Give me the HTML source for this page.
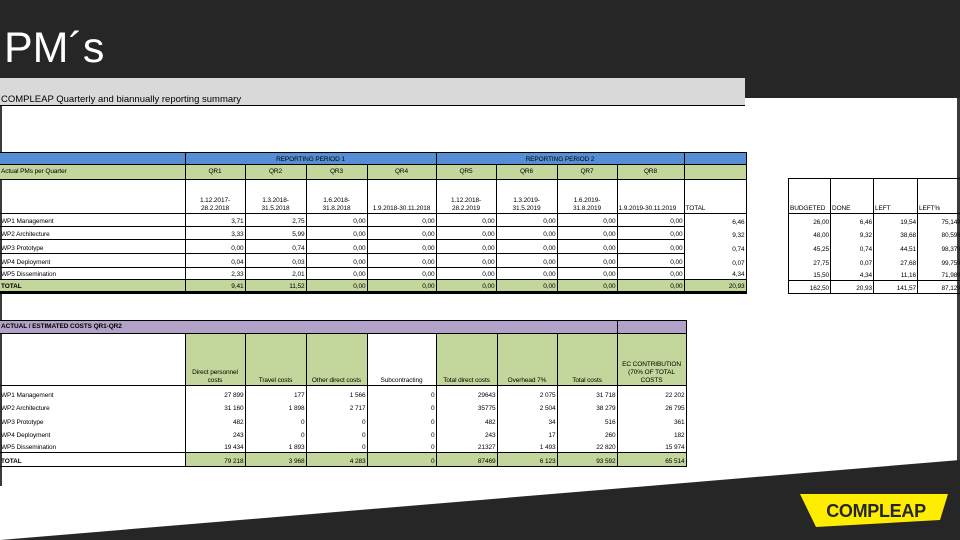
<!DOCTYPE html>
<html><head><meta charset="utf-8"><style>
*{margin:0;padding:0;box-sizing:border-box}
body{width:960px;height:540px;overflow:hidden;background:#fff;position:relative;font-family:"Liberation Sans",sans-serif}
.a{position:absolute}
table{border-collapse:collapse;table-layout:fixed;position:absolute;font-size:6.5px;color:#000;letter-spacing:-0.1px}
td{border:1px solid #000;padding:0 1px;white-space:nowrap;overflow:hidden;text-align:right;vertical-align:bottom;line-height:8px}
td.l{text-align:left;border-left:none}
td.c{text-align:center}
.b{background:#558ed5}
.g{background:#c3d69b}
.p{background:#b3a2c7}
.nb{border-top:none;border-bottom:none}
</style></head><body>
<div class="a" style="left:0;top:0;width:960px;height:78px;background:#262626"></div>
<div class="a" style="left:745px;top:78px;width:215px;height:20px;background:#262626"></div>
<div class="a" style="left:0;top:78px;width:745px;height:28px;background:#d9d9d9;border-bottom:1px solid #000"></div>
<div class="a" style="left:4px;top:24px;font-size:43px;color:#fff;line-height:48px">PM´s</div>
<div class="a" style="left:1px;top:95px;font-size:9.5px;line-height:10px">COMPLEAP Quarterly and biannually reporting summary</div>
<div class="a" style="left:0;top:106px;width:2px;height:380px;background:#3a3a3a"></div>
<div class="a" style="left:957px;top:98px;width:3px;height:380px;background:#3a3a3a"></div>

<table style="left:0;top:152px;width:746px">
<colgroup><col style="width:185px"><col style="width:60px"><col style="width:61px"><col style="width:61px"><col style="width:69px"><col style="width:60px"><col style="width:61px"><col style="width:60px"><col style="width:67px"><col style="width:62px"></colgroup>
<tr style="height:12px"><td class="b l"></td><td class="b c" colspan="4">REPORTING PERIOD 1</td><td class="b c" colspan="4">REPORTING PERIOD 2</td><td class="b"></td></tr>
<tr style="height:15px"><td class="g l" style="vertical-align:middle">Actual PMs per Quarter</td><td class="g c" style="vertical-align:middle">QR1</td><td class="g c" style="vertical-align:middle">QR2</td><td class="g c" style="vertical-align:middle">QR3</td><td class="g c" style="vertical-align:middle">QR4</td><td class="g c" style="vertical-align:middle">QR5</td><td class="g c" style="vertical-align:middle">QR6</td><td class="g c" style="vertical-align:middle">QR7</td><td class="g c" style="vertical-align:middle">QR8</td><td class="g"></td></tr>
<tr style="height:34px"><td class="l"></td><td class="c">1.12.2017-<br>28.2.2018</td><td class="c">1.3.2018-<br>31.5.2018</td><td class="c">1.6.2018-<br>31.8.2018</td><td class="c">1.9.2018-30.11.2018</td><td class="c">1.12.2018-<br>28.2.2019</td><td class="c">1.3.2019-<br>31.5.2019</td><td class="c">1.6.2019-<br>31.8.2019</td><td style="text-align:left">1.9.2019-30.11.2019</td><td style="text-align:left">TOTAL</td></tr>
<tr style="height:13px"><td class="l">WP1 Management</td><td>3,71</td><td>2,75</td><td>0,00</td><td>0,00</td><td>0,00</td><td>0,00</td><td>0,00</td><td>0,00</td><td class="nb">6,46</td></tr>
<tr style="height:13px"><td class="l">WP2 Architecture</td><td>3,33</td><td>5,99</td><td>0,00</td><td>0,00</td><td>0,00</td><td>0,00</td><td>0,00</td><td>0,00</td><td class="nb">9,32</td></tr>
<tr style="height:14px"><td class="l">WP3 Prototype</td><td>0,00</td><td>0,74</td><td>0,00</td><td>0,00</td><td>0,00</td><td>0,00</td><td>0,00</td><td>0,00</td><td class="nb">0,74</td></tr>
<tr style="height:14px"><td class="l">WP4 Deployment</td><td>0,04</td><td>0,03</td><td>0,00</td><td>0,00</td><td>0,00</td><td>0,00</td><td>0,00</td><td>0,00</td><td class="nb">0,07</td></tr>
<tr style="height:12px"><td class="l">WP5 Dissemination</td><td>2,33</td><td>2,01</td><td>0,00</td><td>0,00</td><td>0,00</td><td>0,00</td><td>0,00</td><td>0,00</td><td class="nb">4,34</td></tr>
<tr style="height:13px"><td class="g l" style="font-weight:bold;border-bottom:3px solid #000">TOTAL</td><td class="g" style="border-bottom:3px solid #000">9,41</td><td class="g" style="border-bottom:3px solid #000">11,52</td><td class="g" style="border-bottom:3px solid #000">0,00</td><td class="g" style="border-bottom:3px solid #000">0,00</td><td class="g" style="border-bottom:3px solid #000">0,00</td><td class="g" style="border-bottom:3px solid #000">0,00</td><td class="g" style="border-bottom:3px solid #000">0,00</td><td class="g" style="border-bottom:3px solid #000">0,00</td><td class="g" style="border-bottom:3px solid #000">20,93</td></tr>
</table>

<table style="left:788px;top:178px;width:176px">
<colgroup><col style="width:42px"><col style="width:43px"><col style="width:44px"><col style="width:47px"></colgroup>
<tr style="height:35px"><td style="text-align:left">BUDGETED</td><td style="text-align:left">DONE</td><td style="text-align:left">LEFT</td><td style="text-align:left">LEFT%</td></tr>
<tr style="height:13px"><td class="nb">26,00</td><td class="nb">6,46</td><td class="nb">19,54</td><td class="nb">75,14%</td></tr>
<tr style="height:13px"><td class="nb">48,00</td><td class="nb">9,32</td><td class="nb">38,68</td><td class="nb">80,59%</td></tr>
<tr style="height:14px"><td class="nb">45,25</td><td class="nb">0,74</td><td class="nb">44,51</td><td class="nb">98,37%</td></tr>
<tr style="height:14px"><td class="nb">27,75</td><td class="nb">0,07</td><td class="nb">27,68</td><td class="nb">99,75%</td></tr>
<tr style="height:13px"><td class="nb">15,50</td><td class="nb">4,34</td><td class="nb">11,16</td><td class="nb">71,98%</td></tr>
<tr style="height:13px"><td>162,50</td><td>20,93</td><td>141,57</td><td>87,12%</td></tr>
</table>

<table style="left:0;top:320px;width:686px">
<colgroup><col style="width:185px"><col style="width:60px"><col style="width:61px"><col style="width:61px"><col style="width:69px"><col style="width:61px"><col style="width:60px"><col style="width:60px"><col style="width:69px"></colgroup>
<tr style="height:13px"><td class="p l" colspan="8" style="font-weight:bold;vertical-align:middle">ACTUAL / ESTIMATED COSTS QR1-QR2</td><td class="p"></td></tr>
<tr style="height:52px"><td class="l"></td><td class="g c">Direct personnel<br>costs</td><td class="g c">Travel costs</td><td class="g c">Other direct costs</td><td class="c">Subcontracting</td><td class="g c">Total direct costs</td><td class="g c">Overhead 7%</td><td class="g c">Total costs</td><td class="g c">EC CONTRIBUTION<br>(70% OF TOTAL<br>COSTS</td></tr>
<tr style="height:14px"><td class="l nb">WP1 Management</td><td class="nb">27 899</td><td class="nb">177</td><td class="nb">1 566</td><td class="nb">0</td><td class="nb">29643</td><td class="nb">2 075</td><td class="nb">31 718</td><td class="nb">22 202</td></tr>
<tr style="height:13px"><td class="l nb">WP2 Architecture</td><td class="nb">31 160</td><td class="nb">1 898</td><td class="nb">2 717</td><td class="nb">0</td><td class="nb">35775</td><td class="nb">2 504</td><td class="nb">38 279</td><td class="nb">26 795</td></tr>
<tr style="height:14px"><td class="l nb">WP3 Prototype</td><td class="nb">482</td><td class="nb">0</td><td class="nb">0</td><td class="nb">0</td><td class="nb">482</td><td class="nb">34</td><td class="nb">516</td><td class="nb">361</td></tr>
<tr style="height:13px"><td class="l nb">WP4 Deployment</td><td class="nb">243</td><td class="nb">0</td><td class="nb">0</td><td class="nb">0</td><td class="nb">243</td><td class="nb">17</td><td class="nb">260</td><td class="nb">182</td></tr>
<tr style="height:13px"><td class="l nb">WP5 Dissemination</td><td class="nb">19 434</td><td class="nb">1 893</td><td class="nb">0</td><td class="nb">0</td><td class="nb">21327</td><td class="nb">1 493</td><td class="nb">22 820</td><td class="nb">15 974</td></tr>
<tr style="height:14px"><td class="l" style="font-weight:bold">TOTAL</td><td class="g">79 218</td><td class="g">3 968</td><td class="g">4 283</td><td class="g">0</td><td class="g">87469</td><td class="g">6 123</td><td class="g">93 592</td><td class="g">65 514</td></tr>
</table>

<svg class="a" style="left:0;top:0" width="960" height="540">
<polygon points="0,540 960,460 960,540" fill="#262626"/>
<polygon points="800,494 948,494 940,520 816,527" fill="#ffed00"/>
<text x="876" y="517" text-anchor="middle" font-family="Liberation Sans, sans-serif" font-weight="bold" font-size="18" fill="#262626" letter-spacing="-0.3">COMPLEAP</text>
</svg>
</body></html>
